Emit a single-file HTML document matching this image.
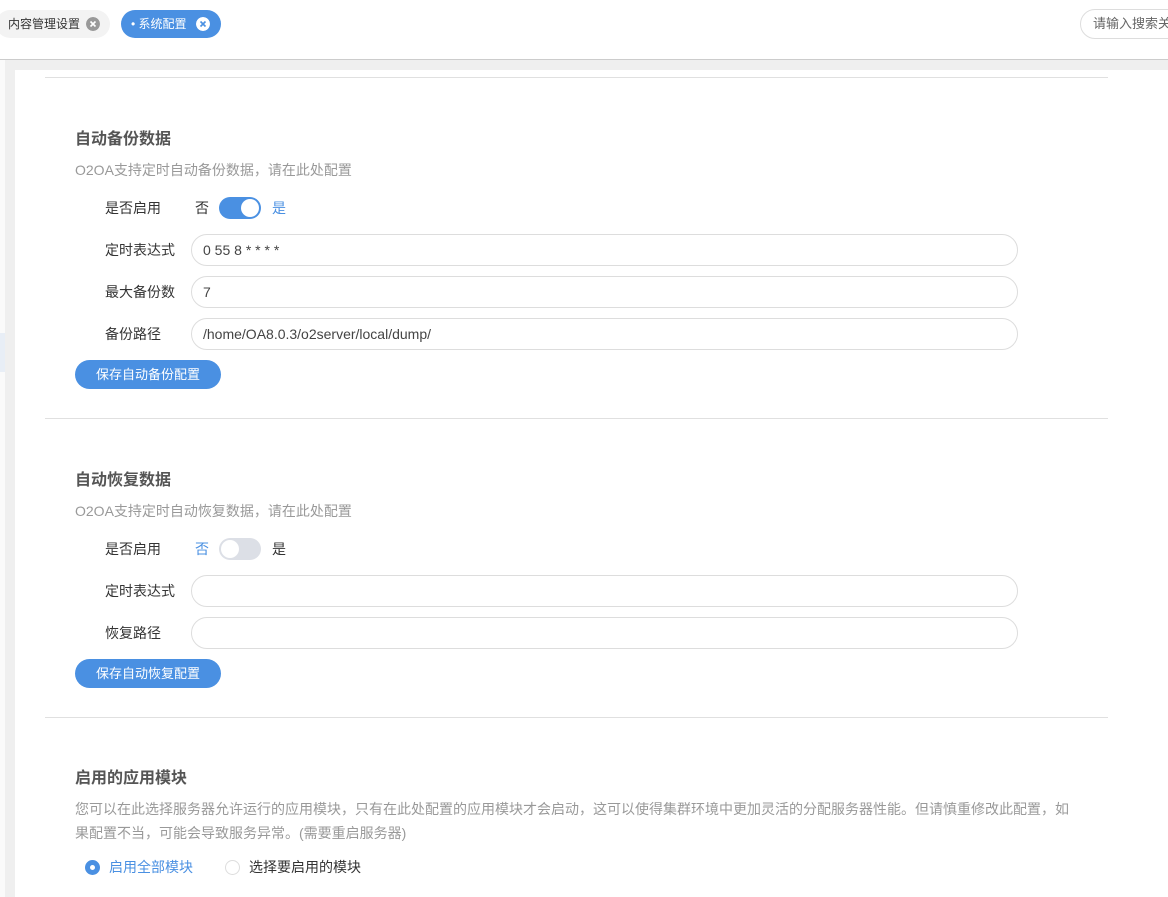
<!DOCTYPE html>
<html><head><meta charset="utf-8"><style>
*{margin:0;padding:0;box-sizing:border-box}
body{width:1168px;height:897px;overflow:hidden;background:#fff;font-family:"Liberation Sans","Noto Sans CJK SC",sans-serif;position:relative;color:#333}
.a{position:absolute}
.tag{position:absolute;top:10px;height:28px;border-radius:14px;font-size:12px;line-height:28px;white-space:nowrap}
.x{position:absolute;top:7px;width:14px;height:14px;border-radius:50%}
.line{position:absolute;left:45px;width:1063px;height:1px;background:#e0e0e0}
h3{position:absolute;left:75px;font-size:16px;font-weight:bold;color:#555;line-height:20px}
.desc{position:absolute;left:75px;font-size:14px;color:#999;line-height:24px}
.lbl{position:absolute;font-size:14px;color:#333;line-height:20px}
.inp{position:absolute;left:191px;width:827px;height:32px;border:1px solid #ddd;border-radius:16px;padding-left:11px;font-size:14px;line-height:30px;color:#444}
.btn{position:absolute;left:75px;width:146px;height:29px;border-radius:15px;background:#4a90e2;color:#fff;font-size:13px;text-align:center;line-height:29px}
.sw{position:absolute;left:219px;width:42px;height:22px;border-radius:11px}
.knob{position:absolute;top:2px;width:18px;height:18px;border-radius:50%;background:#fff}
</style></head><body>
<div class="tag" style="left:-4px;width:114px;background:#f3f3f3;color:#333;padding-left:12px">内容管理设置<svg class="x" style="left:90px" viewBox="0 0 14 14"><circle cx="7" cy="7" r="7" fill="#999"/><path d="M4.5 4.5L9.5 9.5M9.5 4.5L4.5 9.5" stroke="#fff" stroke-width="1.6"/></svg></div>
<div class="tag" style="left:121px;width:100px;background:#4a90e2;color:#fff;padding-left:10px">•&nbsp;系统配置<svg class="x" style="left:75px" viewBox="0 0 14 14"><circle cx="7" cy="7" r="7" fill="#fff"/><path d="M4.5 4.5L9.5 9.5M9.5 4.5L4.5 9.5" stroke="#4a90e2" stroke-width="1.6"/></svg></div>
<div class="a" style="left:1080px;top:9px;width:110px;height:30px;border:1px solid #ddd;border-radius:15px;font-size:13px;color:#666;line-height:28px;padding-left:12px">请输入搜索关键</div>
<div class="a" style="left:0;top:59px;width:1168px;height:838px;background:#efefef;border-top:1px solid #ccc"></div>
<div class="a" style="left:0;top:60px;width:5px;height:837px;background:#fafafa"></div>
<div class="a" style="left:0;top:333px;width:5px;height:39px;background:#e8eef6"></div>
<div class="a" style="left:15px;top:70px;width:1153px;height:827px;background:#fff"></div>
<div class="line" style="top:77px"></div>
<h3 style="top:130px">自动备份数据</h3>
<div class="desc" style="top:158px">O2OA支持定时自动备份数据，请在此处配置</div>
<div class="lbl" style="left:105px;top:198px">是否启用</div>
<div class="lbl" style="left:195px;top:198px">否</div>
<div class="sw" style="top:197px;background:#4a90e2"><div class="knob" style="left:22px"></div></div>
<div class="lbl" style="left:272px;top:198px;color:#4a90e2">是</div>
<div class="lbl" style="left:105px;top:240px">定时表达式</div>
<div class="inp" style="top:234px">0 55 8 * * * *</div>
<div class="lbl" style="left:105px;top:282px">最大备份数</div>
<div class="inp" style="top:276px">7</div>
<div class="lbl" style="left:105px;top:324px">备份路径</div>
<div class="inp" style="top:318px">/home/OA8.0.3/o2server/local/dump/</div>
<div class="btn" style="top:360px">保存自动备份配置</div>
<div class="line" style="top:418px"></div>
<h3 style="top:471px">自动恢复数据</h3>
<div class="desc" style="top:499px">O2OA支持定时自动恢复数据，请在此处配置</div>
<div class="lbl" style="left:105px;top:539px">是否启用</div>
<div class="lbl" style="left:195px;top:539px;color:#4a90e2">否</div>
<div class="sw" style="top:538px;background:#dcdfe6"><div class="knob" style="left:2px"></div></div>
<div class="lbl" style="left:272px;top:539px">是</div>
<div class="lbl" style="left:105px;top:581px">定时表达式</div>
<div class="inp" style="top:575px"></div>
<div class="lbl" style="left:105px;top:623px">恢复路径</div>
<div class="inp" style="top:617px"></div>
<div class="btn" style="top:659px">保存自动恢复配置</div>
<div class="line" style="top:717px"></div>
<h3 style="top:769px">启用的应用模块</h3>
<div class="desc" style="top:797px;width:1000px">您可以在此选择服务器允许运行的应用模块，只有在此处配置的应用模块才会启动，这可以使得集群环境中更加灵活的分配服务器性能。但请慎重修改此配置，如果配置不当，可能会导致服务异常。(需要重启服务器)</div>
<div class="a" style="left:85px;top:860px;width:15px;height:15px;border-radius:50%;background:#4a90e2"><div class="a" style="left:5px;top:5px;width:5px;height:5px;border-radius:50%;background:#fff"></div></div>
<div class="lbl" style="left:109px;top:857px;color:#4a90e2">启用全部模块</div>
<div class="a" style="left:225px;top:860px;width:15px;height:15px;border-radius:50%;border:1px solid #ddd"></div>
<div class="lbl" style="left:249px;top:857px">选择要启用的模块</div>
</body></html>
